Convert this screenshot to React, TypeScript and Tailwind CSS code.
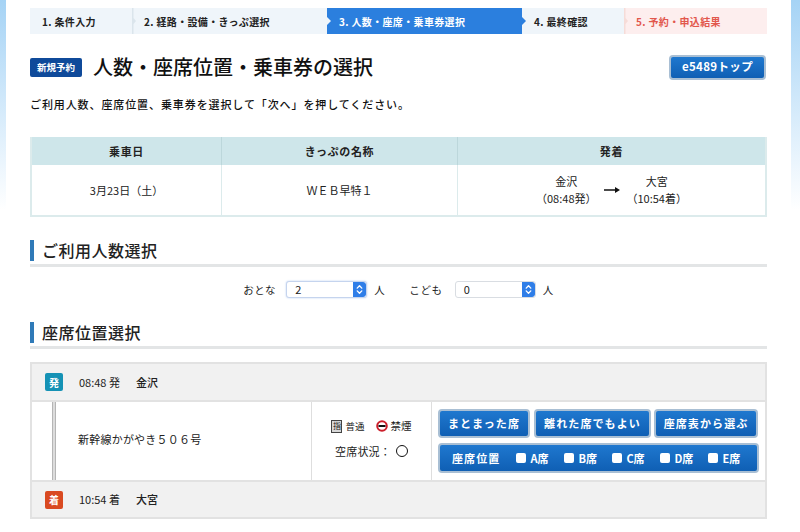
import { ChevronsUpDown } from 'lucide-react';

const font = { fontFamily: '"Noto Sans CJK JP", "Liberation Sans", sans-serif' };

function Step({ label, width, tone, plain }: { label: string; width: string; tone: 'gray' | 'blue' | 'red'; plain?: boolean }) {
  const toneClass =
    tone === 'blue' ? 'bg-[#2b7fde] text-white' : tone === 'red' ? 'bg-[#fdeeee] text-[#e2574c]' : 'bg-[#eff5fa] text-[#222]';
  return (
    <div className={`relative flex h-[26px] items-center pl-3 text-[10px] font-bold tracking-[0.035em] ${width} ${toneClass}`}>
      {!plain && tone !== 'blue' && (
        <svg className="absolute left-0 top-0" width="6" height="26" viewBox="0 0 6 26">
          <path d="M0 0 L1.5 0 L1.5 10 L4 13 L1.5 16 L1.5 26 L0 26 Z" fill={tone === 'red' ? '#f6dcd8' : '#dbe5ec'} />
        </svg>
      )}
      {tone === 'blue' && (
        <>
          <svg className="absolute left-0 top-[9px]" width="4" height="8" viewBox="0 0 4 8">
            <path d="M0 0 L4 4 L0 8 Z" fill="#eff5fa" />
          </svg>
          <svg className="absolute right-[-4px] top-[9px] z-10" width="4" height="8" viewBox="0 0 4 8">
            <path d="M0 0 L4 4 L0 8 Z" fill="#2b7fde" />
          </svg>
        </>
      )}
      {label}
    </div>
  );
}

function SectionHeading({ children }: { children: string }) {
  return (
    <div className="border-b-[3px] border-[#e3e5e6] pb-[3px]">
      <h2 className="border-l-4 border-[#2f7ab8] pl-2 text-[16px] font-medium leading-[21px] tracking-[0.03em] text-[#222]">{children}</h2>
    </div>
  );
}

function Select({ value, focused }: { value: string; focused?: boolean }) {
  return (
    <div className={`flex h-[17px] w-[81px] items-center justify-between overflow-hidden rounded-[3px] border bg-white pl-2 text-[11px] text-[#222] ${focused ? 'border-[#c5d4ee] shadow-[0_0_2px_#b8cdf0]' : 'border-[#d9dde2]'}`}>
      {value}
      <span className="flex h-full w-[13px] items-center justify-center rounded-r-[3px] bg-[#2f7ee8] text-white">
        <ChevronsUpDown size={11} strokeWidth={3} />
      </span>
    </div>
  );
}

function BlueButton({ children, className }: { children: React.ReactNode; className: string }) {
  return (
    <div className={`flex items-center justify-center rounded-[4px] border-2 border-[#a9bfd4] bg-gradient-to-b from-[#1f78cf] to-[#0f5fb4] text-[11px] font-bold tracking-[0.1em] text-white ${className}`}>
      {children}
    </div>
  );
}

function SeatCheck({ label }: { label: string }) {
  return (
    <span className="flex w-[48px] items-center gap-[4px] tracking-normal">
      <span className="h-[10px] w-[10px] rounded-[2px] bg-white" />
      {label}
    </span>
  );
}

function StopRow({ badge, badgeClass, time, station }: { badge: string; badgeClass: string; time: string; station: string }) {
  return (
    <div className="flex items-center bg-[#f1f1f1] pl-[13px] text-[11px] text-[#222]">
      <span className={`flex h-[18px] w-[18px] items-center justify-center rounded-[2px] text-[10px] font-bold text-white ${badgeClass}`}>{badge}</span>
      <span className="ml-[16px] w-[57px]">{time}</span>
      <span className="font-medium">{station}</span>
    </div>
  );
}

export default function App() {
  return (
    <div className="flex h-[532px] w-[800px] overflow-hidden bg-white" style={font}>
      <div className="h-[210px] w-[6px] bg-gradient-to-b from-[#a5d3f5] to-white" />
      <main className="w-[785px] pl-[24px] pr-[24px]">
        <div className="mt-2 flex w-[737px]">
          <Step label="1. 条件入力" width="w-[102px]" tone="gray" plain />
          <Step label="2. 経路・設備・きっぷ選択" width="w-[195px]" tone="gray" />
          <Step label="3. 人数・座席・乗車券選択" width="w-[195px]" tone="blue" />
          <Step label="4. 最終確認" width="w-[102px]" tone="gray" plain />
          <Step label="5. 予約・申込結果" width="w-[143px]" tone="red" />
        </div>

        <div className="mt-[20px] flex h-[26px] w-[737px] items-center">
          <span className="flex h-[19px] w-[52px] items-center justify-center rounded-[2px] bg-[#0f4a9a] text-[9.5px] font-bold text-white">新規予約</span>
          <h1 className="ml-[11px] text-[20px] font-medium text-[#111]">人数・座席位置・乗車券の選択</h1>
          <BlueButton className="ml-auto mr-[1px] h-[25px] w-[97px] !text-[11.5px] !tracking-[0.03em]">e5489トップ</BlueButton>
        </div>

        <p className="mt-[14px] h-[20px] text-[11px] font-medium leading-[20px] tracking-[0.082em] text-[#111]">
          ご利用人数、座席位置、乗車券を選択して「次へ」を押してください。
        </p>

        <div className="mt-[23px] w-[737px] border-2 border-t-0 border-[#dcebec] text-[#222]">
          <div className="grid h-[28px] grid-cols-[190px_236px_1fr] items-center bg-[#cee6ea] text-center text-[11px] font-bold tracking-[0.06em]">
            <span className="flex h-full items-center justify-center border-r border-[#bcd7db]">乗車日</span>
            <span className="flex h-full items-center justify-center border-r border-[#bcd7db]">きっぷの名称</span>
            <span>発着</span>
          </div>
          <div className="grid h-[50px] grid-cols-[190px_236px_1fr] items-center text-center text-[11px]">
            <span className="flex h-full items-center justify-center border-r border-[#dcebec]">3月23日（土）</span>
            <span className="flex h-full items-center justify-center border-r border-[#dcebec]">ＷＥＢ早特１</span>
            <div className="flex items-center justify-center gap-[7px] leading-[17px]">
              <div>
                金沢
                <br />
                （08:48発）
              </div>
              <svg width="16" height="6" viewBox="0 0 16 6">
                <path d="M0 2.2 H11 V0 L16 3 L11 6 V3.8 H0 Z" fill="#111" />
              </svg>
              <div>
                大宮
                <br />
                （10:54着）
              </div>
            </div>
          </div>
        </div>

        <div className="mt-[23px] w-[737px]">
          <SectionHeading>ご利用人数選択</SectionHeading>
        </div>

        <div className="mt-[14px] flex h-[17px] w-[737px] items-center justify-center text-[10.5px] tracking-[0.06em] text-[#222]">
          <span className="mr-[10px]">おとな</span>
          <Select value="2" focused />
          <span className="ml-[7px] mr-[24px]">人</span>
          <span className="mr-[12px]">こども</span>
          <Select value="0" />
          <span className="ml-[7px]">人</span>
        </div>

        <div className="mt-[24px] w-[737px]">
          <SectionHeading>座席位置選択</SectionHeading>
        </div>

        <div className="mt-[13px] grid h-[157px] w-[737px] grid-rows-[36px_1fr_35px] gap-y-[2px] border-2 border-[#e2e2e2] bg-[#e2e2e2]">
          <StopRow badge="発" badgeClass="bg-[#1592b5]" time="08:48 発" station="金沢" />
          <div className="flex bg-white text-[11px] text-[#222]">
            <div className="flex w-[279px] items-center">
              <span className="ml-[20px] h-full w-[4px] border-x border-[#b5b5b5] bg-[#dcdcdc]" />
              <span className="ml-[22px] pb-[3px] tracking-[0.02em]">新幹線かがやき５０６号</span>
            </div>
            <div className="flex w-[121px] flex-col items-center justify-center gap-[9px] border-x border-[#dedede] pb-[4px]">
              <div className="flex items-center gap-[3px] text-[9.5px]">
                <span className="flex h-[13px] w-[11px] items-center justify-center border border-[#444] bg-[#d8d8d8] text-[8px] leading-none text-[#222]">指</span>
                普通
                <svg className="ml-2" width="12" height="12" viewBox="0 0 12 12">
                  <circle cx="6" cy="6" r="4.8" fill="white" stroke="#cc1f2b" strokeWidth="2" />
                  <rect x="2.5" y="5" width="7" height="2" fill="#111" />
                </svg>
                <span className="text-[10.5px]">禁煙</span>
              </div>
              <div className="flex items-center gap-[5px]">
                <span className="tracking-[0.02em]">空席状況：</span>
                <span className="h-[12px] w-[12px] rounded-full border-[1.5px] border-[#111]" />
              </div>
            </div>
            <div className="flex flex-1 flex-col gap-[5px] pl-[6px] pt-[7px]">
              <div className="flex gap-[3px]">
                <BlueButton className="mr-[1px] h-[29px] w-[92px]">まとまった席</BlueButton>
                <BlueButton className="h-[29px] w-[117px]">離れた席でもよい</BlueButton>
                <BlueButton className="h-[29px] w-[104px]">座席表から選ぶ</BlueButton>
              </div>
              <BlueButton className="h-[30px] w-[321px] !justify-start whitespace-nowrap pl-[12px]">
                <span className="mr-[16px] shrink-0">座席位置</span>
                <SeatCheck label="A席" />
                <SeatCheck label="B席" />
                <SeatCheck label="C席" />
                <SeatCheck label="D席" />
                <SeatCheck label="E席" />
              </BlueButton>
            </div>
          </div>
          <StopRow badge="着" badgeClass="bg-[#d94a21]" time="10:54 着" station="大宮" />
        </div>
      </main>
      <div className="h-[210px] w-[9px] bg-gradient-to-b from-[#a5d3f5] to-white" />
    </div>
  );
}
